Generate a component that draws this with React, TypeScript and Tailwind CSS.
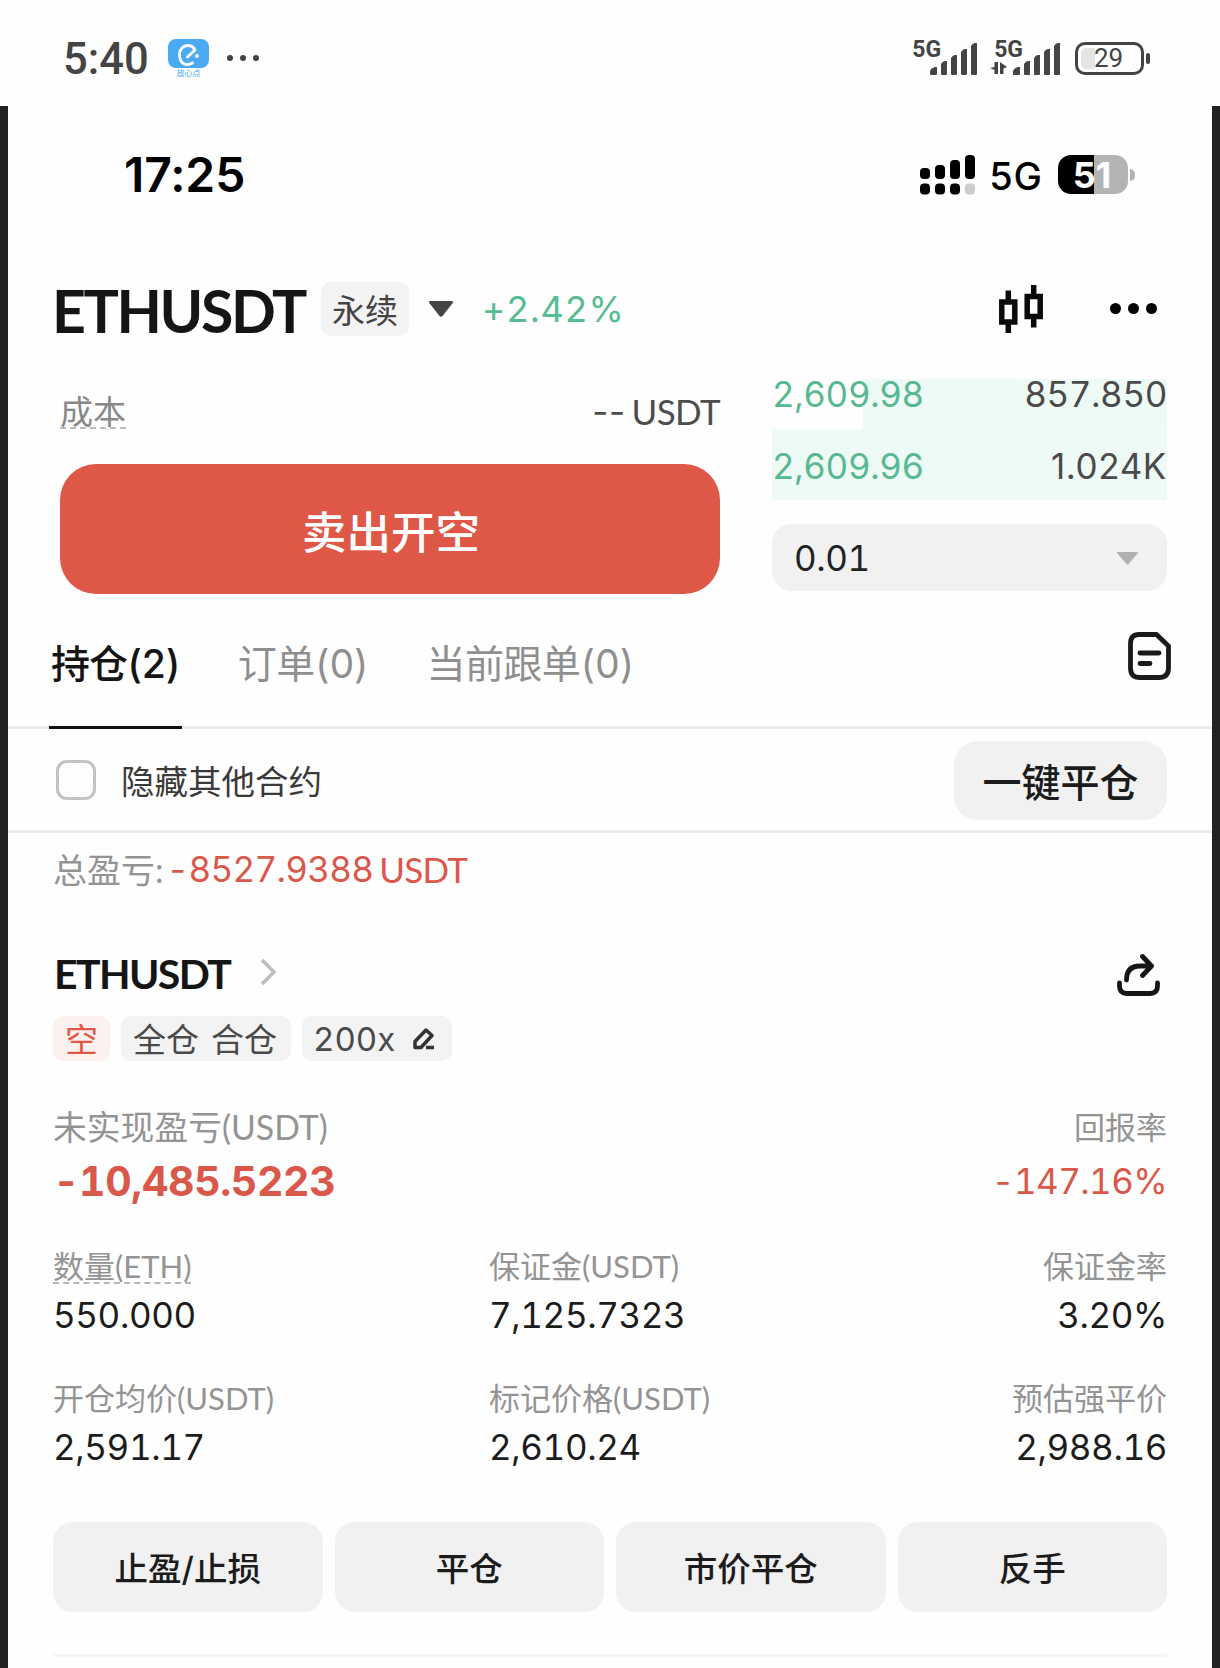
import React, { useState } from 'react';

interface Stat {
  label: string;
  value: string;
  dashed?: boolean;
}

const stats: Stat[][] = [
  [
    { label: '数量(ETH)', value: '550.000', dashed: true },
    { label: '保证金(USDT)', value: '7,125.7323' },
    { label: '保证金率', value: '3.20%' },
  ],
  [
    { label: '开仓均价(USDT)', value: '2,591.17' },
    { label: '标记价格(USDT)', value: '2,610.24' },
    { label: '预估强平价', value: '2,988.16' },
  ],
];

const tabs = ['持仓(2)', '订单(0)', '当前跟单(0)'];
const actions = ['止盈/止损', '平仓', '市价平仓', '反手'];

const SignalBars = () => (
  <svg width="48" height="32" viewBox="0 0 48 32" fill="#444">
    <path d="M0 31v-3q1-3 5-4h2v7q0 1-1 1H1q-1 0-1-1z" />
    <path d="M11 31V21q2-3 4-3h2v13q0 1-1 1h-4q-1 0-1-1z" />
    <path d="M21 31V15q2-3 4-3h2v19q0 1-1 1h-4q-1 0-1-1z" />
    <path d="M31 31V9q2-3 4-3h2v25q0 1-1 1h-4q-1 0-1-1z" />
    <path d="M41 31V3q2-3 4-3h2v31q0 1-1 1h-4q-1 0-1-1z" />
  </svg>
);

const SystemBar = () => (
  <div className="flex h-[106px] items-center pr-[70px] pl-[63px] pt-[10px] font-['Roboto',sans-serif] text-[#444]">
    <span className="w-[105px] pt-[3px] text-[43.5px] leading-none font-medium">5:40</span>
    <div className="flex w-[41px] flex-col items-center">
      <svg width="41" height="29" viewBox="0 0 41 29" fill="none">
        <rect width="41" height="29" rx="8" fill="#4aabf2" />
        <path d="M19.500 18l7.500-7c-2-5-9-6-13-2-5 6-2 16 4.500 16.500 3 0 4.500-.5 6-1.500" stroke="#fff" strokeWidth="2.800" strokeLinecap="round" strokeLinejoin="round" />
        <circle cx="29" cy="17" r="2" fill="#fff" />
      </svg>
      <span className="mt-[1px] font-['Noto_Sans_CJK_SC',sans-serif] text-[8px] leading-[8px] text-[#4aabf2]">放心点</span>
    </div>
    <div className="ml-[18px] flex gap-[7px]">
      <i className="size-[6px] rounded-full bg-[#444]" />
      <i className="size-[6px] rounded-full bg-[#444]" />
      <i className="size-[6px] rounded-full bg-[#444]" />
    </div>
    <div className="-mt-[2px] ml-auto flex items-end">
      <span className="mb-[15px] text-[23px] leading-[20px] font-bold">5G</span>
      <div className="-ml-[11px]"><SignalBars /></div>
      <div className="ml-[12px] flex flex-col">
        <span className="mb-[1px] ml-[4px] text-[23px] leading-[20px] font-bold">5G</span>
        <svg width="17" height="14" viewBox="0 0 17 14" fill="#444">
          <path d="M8 1v12H4.500V9L0 7l4.500-1V1zM10 13V1l7 5-3.500 1.500V13z" />
        </svg>
      </div>
      <div className="-ml-[10px]"><SignalBars /></div>
      <div className="ml-[14px] flex items-center gap-[2px]">
        <div className="flex h-[33px] w-[69px] items-center rounded-[10px] border-[3px] border-[#444] p-[3px]">
          <div className="h-full w-[14px] rounded-l-[5px] bg-[#e4e4e4]" />
          <span className="-ml-[1px] text-[26px] leading-none">29</span>
        </div>
        <div className="h-[11px] w-[4px] rounded-[2px] bg-[#444]" />
      </div>
    </div>
  </div>
);

const PhoneBar = () => (
  <div className="flex h-[137px] items-center pr-[77px] pl-[116px] text-black">
    <span className="pt-[1px] text-[48px] leading-none font-semibold tracking-[-0.1px] normal-nums">17:25</span>
    <svg className="ml-auto" width="56" height="40" viewBox="0 0 56 40">
      <rect x="0" y="13" width="10" height="11" rx="4" />
      <rect x="15" y="10" width="10" height="14" rx="4" />
      <rect x="30" y="5" width="10" height="19" rx="4" />
      <rect x="45" y="0" width="10" height="24" rx="4" />
      <rect x="0" y="28.5" width="10" height="11" rx="4" />
      <rect x="15" y="28.5" width="10" height="11" rx="4" />
      <rect x="30" y="28.5" width="10" height="11" rx="4" />
      <rect x="45" y="28.5" width="10" height="11" rx="4" fill="#ccc" />
    </svg>
    <span className="ml-[13px] w-[69px] pt-[3px] text-[38px] leading-none font-medium">5G</span>
    <div className="flex h-[39px] w-[70px] items-center justify-center rounded-[13px] bg-linear-to-r from-black from-51% to-[#b2b4b4] to-51%">
      <span className="-ml-[2px] text-[36px] leading-none font-bold text-white normal-nums">51</span>
    </div>
    <div className="ml-[2px] h-[12px] w-[5px] rounded-r-full bg-[#b2b4b4]" />
  </div>
);

const Header = () => (
  <div className="flex h-[132px] items-center pr-[55px] pl-[44px]">
    <h1 className="w-[269px] pt-[2px] font-['Lato',sans-serif] text-[59px] leading-none font-bold tracking-[-2.4px] text-[#151515]">ETHUSDT</h1>
    <span className="flex h-[54px] w-[88px] items-center justify-center rounded-[10px] bg-[#f3f3f3] pt-[4px] text-[33px] leading-none text-[#444]">永续</span>
    <svg className="ml-[19px]" width="26" height="16" viewBox="0 0 26 16" fill="#444">
      <path d="M2.500 0h21q2.500 0 1 2.200L14.500 15q-1.500 1.500-3 0L1.500 2.200Q0 0 2.500 0z" />
    </svg>
    <span className="ml-[28px] text-[36px] leading-none tracking-[0.7px] text-[#55bd91]">+2.42%</span>
    <svg className="ml-auto" width="45" height="48" viewBox="0 0 45 48" fill="none" stroke="#0a0a0a" strokeWidth="5.500">
      <path d="M2.800 17h13v20h-13zM9.300 5.500V15M9.300 39v9" />
      <path d="M28.200 11.500h13v20h-13zM34.700 0v9.500M34.700 33.500v9" />
    </svg>
    <div className="-mt-[1px] ml-[66px] flex gap-[7px]">
      <i className="size-[11px] rounded-full bg-black" />
      <i className="size-[11px] rounded-full bg-black" />
      <i className="size-[11px] rounded-full bg-black" />
    </div>
  </div>
);

const TradePanel = () => (
  <div className="mt-[4px] flex justify-between pr-[45px] pl-[52px]">
    <div className="w-[660px]">
      <div className="flex h-[66px] items-center justify-between">
        <span className="mt-[1px] border-b-2 border-dashed border-[#bbb] text-[33px] leading-[30px] text-[#888]">成本</span>
        <span className="-mt-[2px] flex items-center gap-[6px] font-['Lato',sans-serif] text-[35px] leading-none text-[#4d4d4d]">
          <span className="font-['Inter',sans-serif] text-[35px] tracking-[0.5px] normal-nums">--</span>
          <span className="tracking-[-0.6px]">USDT</span>
        </span>
      </div>
      <button className="mt-[19px] flex h-[130px] w-full items-center justify-center rounded-[36px] bg-[#df5847] pt-[9px] pl-[2px] text-[44.5px] leading-none font-medium text-white">
        卖出开空
      </button>
    </div>
    <div className="w-[395px] text-[35px] leading-none tracking-[-0.4px] text-[#4a4a4a]">
      <div className="flex h-[50px] justify-between bg-linear-to-r from-transparent from-23% to-[#eefaf6] to-23%">
        <span className="-mt-[2px] text-[#58b891]">2,609.98</span>
        <span className="-mt-[2px]">857.850</span>
      </div>
      <div className="flex h-[71px] items-center justify-between bg-[#eefaf6] pt-[3px]">
        <span className="text-[#58b891]">2,609.96</span>
        <span className="tracking-[0.6px] normal-nums">1.024K</span>
      </div>
      <div className="mt-[24px] flex h-[67px] items-center justify-between rounded-[20px] bg-[#f1f1f1] pt-[1px] pr-[29px] pl-[22px] text-[#222]">
        <span>0.01</span>
        <svg width="21" height="13" viewBox="0 0 21 13" fill="#b0b0b0"><path d="M1 0h19q1.500 0 .5 1.500l-9 10.500q-1 1-2 0L.5 1.500Q-.5 0 1 0z" /></svg>
      </div>
    </div>
  </div>
);

const TabBar: React.FC<{ active: number; onChange: (i: number) => void }> = ({ active, onChange }) => (
  <div className="flex h-[135px] items-start justify-between border-b-[3px] border-[#ebebeb] pr-[41px] pl-[41px]">
    <div className="flex gap-[54px]">
      {tabs.map((tab, i) => (
        <button
          key={tab}
          onClick={() => onChange(i)}
          className={
            i === active
              ? 'h-[135px] border-b-[3px] border-[#111] px-[2px] text-[39px] leading-[140px] font-medium tracking-[-1px] text-[#151515]'
              : 'h-[135px] px-[2px] text-[39px] leading-[140px] tracking-[-0.6px] text-[#8f8f8f]'
          }
        >
          {tab}
        </button>
      ))}
    </div>
    <svg className="mt-[38px]" width="43" height="48" viewBox="0 0 43 48" fill="none" stroke="#1a1a1a" strokeWidth="4.800" strokeLinecap="round" strokeLinejoin="round">
      <path d="M11 2.500h17.500L40.500 14v22q0 9.500-9.500 9.500H12Q2.500 45.500 2.500 36V12q0-9.500 8.500-9.500z" />
      <path d="M12 21h19M12 31.500h10" />
    </svg>
  </div>
);

const PositionCard = () => (
  <div className="pr-[45px] pl-[45px]">
    <div className="flex items-center">
      <h2 className="pl-[1px] font-['Lato',sans-serif] text-[41px] leading-[48px] font-bold tracking-[-1.6px] text-[#151515]">ETHUSDT</h2>
      <svg className="-mt-[4px] ml-[30px]" width="18" height="28" viewBox="0 0 18 28" fill="none" stroke="#bbb" strokeWidth="3.500"><path d="M2 2l12 12L2 26" /></svg>
      <svg className="mt-[2px] mr-[7px] ml-auto" width="43" height="42" viewBox="0 0 43 42" fill="none" stroke="#151515" strokeWidth="4.800" strokeLinecap="round" strokeLinejoin="round">
        <path d="M2.500 29v3q0 7.500 7.500 7.500h23q7.500 0 7.500-7.500v-3" />
        <path d="M9.500 26C9.500 16 15 12 23 12h10.500M25.500 2.500l9 9.500-9 9.500" />
      </svg>
    </div>
    <div className="mt-[18px] flex h-[45px] gap-[11px] text-[33px] leading-[48px] text-[#4a4a4a]">
      <span className="w-[57px] rounded-[10px] bg-[#fdf1ef] text-center text-[#df5847]">空</span>
      <span className="w-[170px] rounded-[10px] bg-[#f3f3f3] pr-[2px] text-center whitespace-nowrap [word-spacing:3px]">全仓 合仓</span>
      <span className="flex w-[150px] items-center rounded-[10px] bg-[#f3f3f3] pl-[11px]">
        200x
        <svg className="mr-[17px] ml-auto" width="22" height="22" viewBox="0 0 22 22" fill="none" stroke="#333" strokeWidth="3.500" strokeLinejoin="round">
          <path d="M2 19.500v-6L13 2l6 5.500L8 19.500zM13 19.500h8" />
        </svg>
      </span>
    </div>
    <div className="mt-[43px] flex justify-between font-['Lato','Noto_Sans_CJK_SC',sans-serif] text-[31px] leading-[46px] text-[#949494]">
      <span className="text-[33.8px]">未实现盈亏(USDT)</span>
      <span>回报率</span>
    </div>
    <div className="flex items-center justify-between text-[35px] leading-[62px] text-[#d9584a]">
      <span className="text-[41px] font-bold tracking-[-0.4px]">-10,485.5223</span>
      <span className="tracking-[-0.6px]">-147.16%</span>
    </div>
    {stats.map((row, r) => (
      <div key={r} className="mt-[32px] grid h-[100px] grid-cols-[436px_1fr_auto]">
        {row.map((s, c) => (
          <div key={s.label} className={c === 2 ? 'text-right' : 'text-left'}>
            <div className="h-[46px] font-['Lato','Noto_Sans_CJK_SC',sans-serif] text-[31px] leading-[45px] text-[#949494]">
              {s.dashed ? (
                <span className="inline-block border-b-2 border-dashed border-[#b5b5b5] leading-[31px]">{s.label}</span>
              ) : (
                s.label
              )}
            </div>
            <div className="text-[35px] leading-[50px] tracking-[-0.4px] text-[#1c1c1c]">{s.value}</div>
          </div>
        ))}
      </div>
    ))}
    <div className="mt-[46px] grid grid-cols-4 gap-[12px]">
      {actions.map(label => (
        <button key={label} className="h-[90px] rounded-[20px] bg-[#f1f1f1] pt-[6px] text-[33.5px] leading-none font-medium text-[#1c1c1c]">
          {label}
        </button>
      ))}
    </div>
    <div className="mt-[42px] h-[3px] bg-[#f6f6f6]" />
  </div>
);

const App: React.FC = () => {
  const [active, setActive] = useState(0);
  const [hideOthers, setHideOthers] = useState(false);

  return (
    <div className="h-[1668px] w-[1220px] overflow-hidden bg-[#fefefe] font-['Inter','Noto_Sans_CJK_SC',sans-serif]">
      <SystemBar />
      <div className="h-[1562px] border-x-8 border-[#222] tabular-nums">
        <PhoneBar />
        <Header />
        <TradePanel />
        <TabBar active={active} onChange={setActive} />
        <div className="flex h-[104px] items-center border-b-[3px] border-[#ebebeb] pt-[1px] pr-[45px] pl-[48px]">
          <button
            onClick={() => setHideOthers(!hideOthers)}
            className="size-[40px] rounded-[11px] border-[3px] border-[#c2c2c2]"
          />
          <span className="ml-[25px] pt-[5px] text-[33.5px] leading-none text-[#3a3a3a]">隐藏其他合约</span>
          <button className="ml-auto h-[79px] w-[213px] rounded-[24px] bg-[#f1f1f1] pt-[5px] text-[39px] leading-none font-medium text-[#1c1c1c]">
            一键平仓
          </button>
        </div>
        <div className="flex h-[117px] pl-[45px] font-['Lato','Noto_Sans_CJK_SC',sans-serif] text-[34px] leading-[73px]">
          <span className="text-[#949494]">总盈亏:</span>
          <span className="ml-[3px] font-['Inter',sans-serif] text-[35px] tracking-[-0.7px] text-[#d9584a]">-8527.9388</span>
          <span className="ml-[6px] text-[35px] tracking-[-0.7px] text-[#d9584a]">USDT</span>
        </div>
        <PositionCard />
      </div>
    </div>
  );
};

export default App;
